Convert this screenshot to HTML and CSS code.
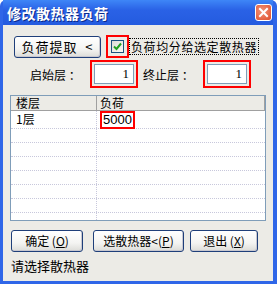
FILE: index.html
```html
<!DOCTYPE html>
<html lang="zh-CN">
<head>
    <meta charset="UTF-8">
    <meta name="viewport" content="width=device-width, initial-scale=1.0">
    <link rel="stylesheet" href="styles.css">
    <title>修改散热器负荷</title>
</head>
<body>
    <div class="window">
        <div class="titlebar">
            <span class="title">修改散热器负荷</span>
            <span class="close-btn">
                <svg width="11" height="11" viewBox="0 0 11 11">
                    <path d="M2 2 L9 9 M9 2 L2 9" stroke="#fff" stroke-width="2" stroke-linecap="square"/>
                </svg>
            </span>
        </div>

        <div class="content">
            <!-- row 1 -->
            <div class="row row-top">
                <button class="xp-btn btn-extract">负荷提取&nbsp;&nbsp;&lt;</button>
                <span class="mark mark-check">
                    <span class="checkbox">
                        <svg width="9" height="9" viewBox="0 0 9 9">
                            <path d="M1 4.5 L3.5 7 L8 1.5" fill="none" stroke="#21a121" stroke-width="2"/>
                        </svg>
                    </span>
                </span>
                <span class="check-label">负荷均分给选定散热器</span>
            </div>

            <!-- row 2 -->
            <div class="row row-floors">
                <span class="field-label">启始层 ：</span>
                <span class="mark mark-input">
                    <span class="text-input">1</span>
                </span>
                <span class="field-label label-end">终止层 ：</span>
                <span class="mark mark-input">
                    <span class="text-input">1</span>
                </span>
            </div>

            <!-- table -->
            <div class="grid">
                <div class="grid-head">
                    <div class="cell col-floor">楼层</div>
                    <div class="cell col-load">负荷</div>
                </div>
                <div class="grid-row first">
                    <div class="cell col-floor">1层</div>
                    <div class="cell col-load"><span class="mark mark-value">5000</span></div>
                </div>
                <div class="grid-row"><div class="cell col-floor"></div><div class="cell col-load"></div></div>
                <div class="grid-row"><div class="cell col-floor"></div><div class="cell col-load"></div></div>
                <div class="grid-row"><div class="cell col-floor"></div><div class="cell col-load"></div></div>
                <div class="grid-row"><div class="cell col-floor"></div><div class="cell col-load"></div></div>
                <div class="grid-row"><div class="cell col-floor"></div><div class="cell col-load"></div></div>
                <div class="grid-row"><div class="cell col-floor"></div><div class="cell col-load"></div></div>
                <div class="grid-row last"><div class="cell col-floor"></div><div class="cell col-load"></div></div>
            </div>

            <!-- buttons -->
            <div class="row row-buttons">
                <button class="xp-btn btn-ok">确定 (<u>O</u>)</button>
                <button class="xp-btn btn-pick">选散热器&lt;(<u>P</u>)</button>
                <button class="xp-btn btn-exit">退出 (<u>X</u>)</button>
            </div>

            <div class="status">请选择散热器</div>
        </div>
    </div>
</body>
</html>
```

FILE: styles.css
```css
/* Reset */
* {
    margin: 0;
    padding: 0;
    box-sizing: border-box;
}

body {
    background: #fff;
    font-family: "Noto Sans CJK SC", "Liberation Sans", sans-serif;
    font-size: 12px;
    color: #000;
}

/* Window frame */
.window {
    width: 277px;
    height: 284px;
    background: #2f66e8;
    padding: 0 4px 3px 3px;
    display: flex;
    flex-direction: column;
    border-radius: 6px 6px 0 0;
}

.titlebar {
    height: 25px;
    display: flex;
    align-items: center;
    justify-content: space-between;
    padding: 0 1px 0 4px;
    background: linear-gradient(#3e86f7, #2a62e6 40%, #245bdf);
}

.title {
    color: #fff;
    font-weight: bold;
    font-size: 14px;
    letter-spacing: 0.5px;
    text-shadow: 1px 1px 0 #0a2a8a;
}

.close-btn {
    width: 17px;
    height: 17px;
    border: 1px solid #fff;
    border-radius: 3px;
    background: radial-gradient(circle at 40% 40%, #f2947a, #de4c2a);
    display: flex;
    align-items: center;
    justify-content: center;
}

.content {
    flex: 1;
    background: #ecebe6;
    padding: 8px 7px 0 7px;
    display: flex;
    flex-direction: column;
}

/* Rows */
.row {
    display: flex;
    align-items: center;
}

.row-top {
    height: 23px;
    margin-top: 2px;
}

.row-floors {
    height: 28px;
    margin-top: 2px;
    padding-left: 20px;
}

/* XP buttons */
.xp-btn {
    font-family: "Noto Sans CJK SC", "Liberation Serif", serif;
    font-size: 12px;
    height: 22px;
    border: 1px solid #1f3f7a;
    border-radius: 3px;
    background: linear-gradient(#ffffff, #f4f4f2 60%, #dcdcd8);
    box-shadow: inset -1px -1px 0 #c8c8d0;
    color: #000;
    line-height: 18px;
}

.xp-btn u {
    text-decoration: underline;
}

.btn-extract {
    width: 87px;
    margin-left: 4px;
    font-size: 13px;
    letter-spacing: 1px;
}

/* Red annotation boxes */
.mark {
    border: 2px solid #f00;
    display: flex;
    align-items: center;
    justify-content: center;
}

.mark-check {
    width: 23px;
    height: 23px;
    margin-left: 5px;
}

.checkbox {
    width: 13px;
    height: 13px;
    border: 1px solid #1c5180;
    background: linear-gradient(135deg, #dcdcd6, #fafaf8);
    display: flex;
    align-items: center;
    justify-content: center;
}

.check-label {
    padding: 0 1px;
    border: 1px dotted #000;
    line-height: 15px;
    letter-spacing: 0.6px;
}

.field-label {
    width: 60px;
}

.label-end {
    margin-left: 5px;
    width: 60px;
}

.mark-input {
    width: 48px;
    height: 28px;
}

.text-input {
    width: 40px;
    height: 20px;
    border: 1px solid #7f9db9;
    background: #fff;
    text-align: right;
    padding-right: 4px;
    line-height: 18px;
    font-family: "Liberation Serif", serif;
    font-size: 13px;
}

/* Grid */
.grid {
    margin-top: 7px;
    height: 126px;
    border: 1px solid #7f9db9;
    background: #fff;
    overflow: hidden;
}

.grid-head {
    display: flex;
    height: 15px;
    background: #ecebe6;
    border-bottom: 1px solid #a0a0a0;
}

.grid-head .cell {
    border-right: 1px solid #a0a0a0;
    line-height: 14px;
}

.grid-row {
    display: flex;
    height: 14px;
    border-bottom: 1px dotted #c8c8dc;
}

.grid-row.first {
    height: 18px;
}

.cell {
    padding-left: 5px;
    line-height: 16px;
}

.grid-row .col-floor {
    border-right: 1px dotted #c8c8dc;
}

.col-floor {
    width: 86px;
}

.col-load {
    flex: 1;
    padding-left: 3px;
}

.mark-value {
    width: 35px;
    height: 18px;
    display: inline-flex;
    font-family: "Liberation Sans", sans-serif;
    font-size: 13px;
}

/* Bottom buttons */
.row-buttons {
    margin-top: 9px;
    padding-left: 1px;
}

.btn-ok {
    width: 72px;
}

.btn-pick {
    width: 91px;
    margin-left: 10px;
}

.btn-exit {
    width: 68px;
    margin-left: 6px;
}

.status {
    margin-top: 4px;
    padding-left: 1px;
    font-size: 13px;
}
```
